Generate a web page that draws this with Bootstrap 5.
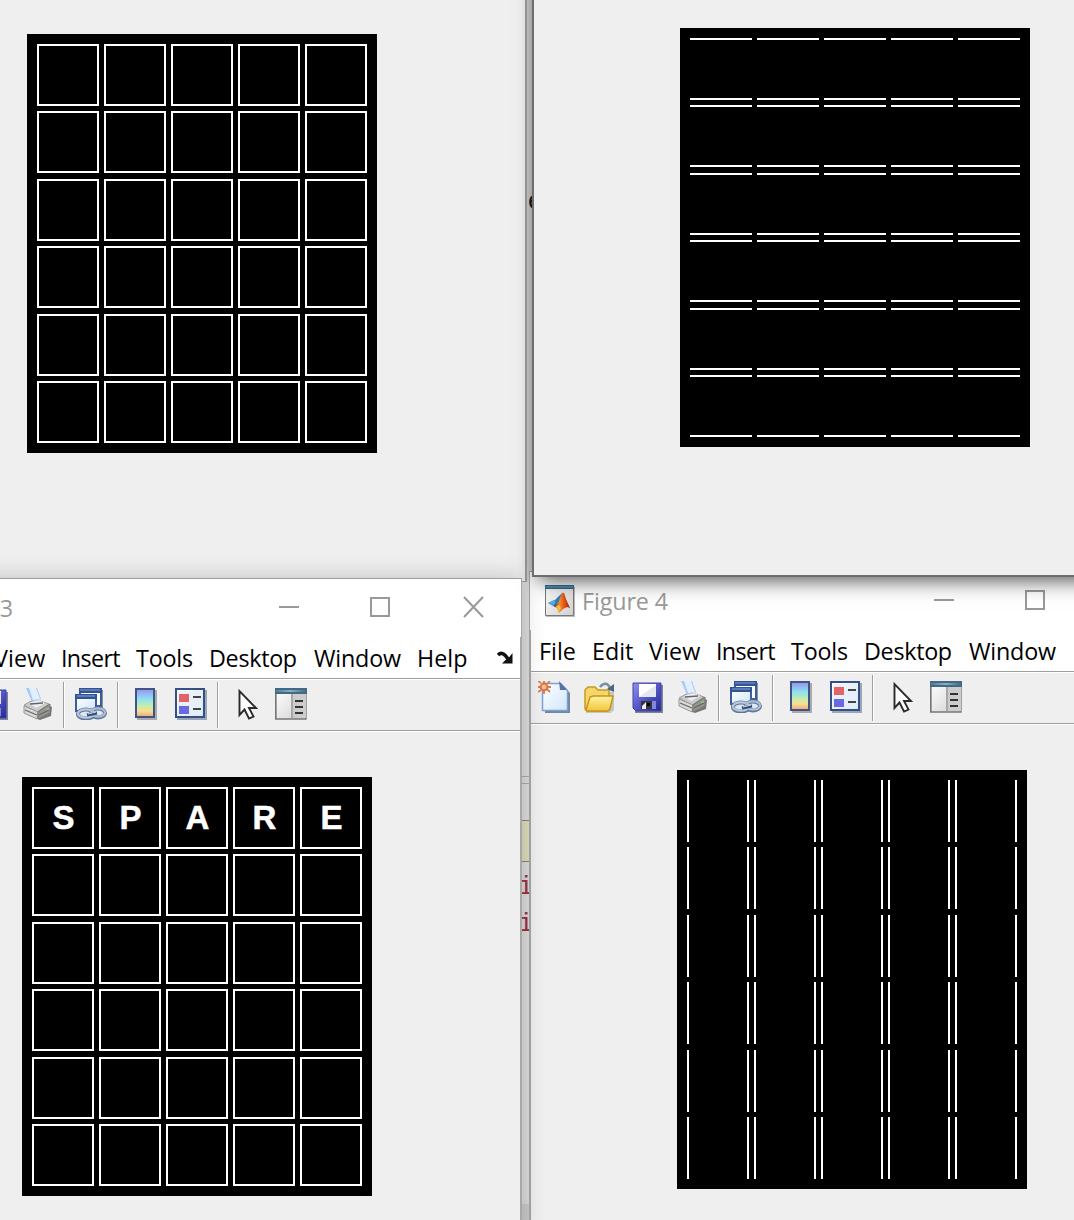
<!DOCTYPE html>
<html lang="en">
<head>
<meta charset="utf-8">
<meta name="viewport" content="width=device-width, initial-scale=1">
<title>Figures</title>
<link href="https://cdn.jsdelivr.net/npm/bootstrap@5.3.0/dist/css/bootstrap.min.css" rel="stylesheet">
<style>
body{margin:0;background:#d3d3d3;font-family:"Open Sans","Noto Sans",sans-serif;color:#000}
.desk{width:1074px;height:1220px;background:#d3d3d3}
/* editor visible between the figure windows */
.editor{left:518px;top:0;width:24px;height:1220px;background:linear-gradient(#d0d0d0 580px,#dcdcdc 580px)}
.code{font-family:"Liberation Mono",monospace;font-size:26px;line-height:30px;color:#1a1a1a}
.err{color:#a03040;border-bottom:1px solid #a02030;line-height:30px;height:22px;width:20px;overflow:visible}
.win{background:#efefef;overflow:hidden}
.w1{left:-120px;top:-200px;width:647px;height:782px;border-right:2px solid #a0a0a0;border-bottom:1px solid #a0a0a0}
.w2{left:532px;top:-200px;width:660px;height:777px;border:2px solid #6d6d6d;box-shadow:0 11px 20px -7px rgba(0,0,0,.6),0 0 14px rgba(0,0,0,.13)}
.w3{left:-126px;top:578px;width:648px;height:660px;box-shadow:0 0 22px rgba(0,0,0,.2)}
.w4{left:529px;top:571px;width:648px;height:667px}
.w3,.w4{border-top:1px solid #9f9f9f}
.w3::after{content:"";position:absolute;right:0;top:0;width:2px;height:660px;background:linear-gradient(90deg,#fff 1px,#a8a8a8 1px) 0 0/2px 58px no-repeat,linear-gradient(transparent 58px,#a8a8a8 58px)}
.w4::after{content:"";position:absolute;left:0;top:0;width:2px;height:667px;background:linear-gradient(90deg,#a8a8a8 1px,#fff 1px) 0 0/2px 58px no-repeat,linear-gradient(transparent 58px,#a8a8a8 58px)}
.caption{height:58px;background:#fff;padding:13px 0 0 15px}
.caption .ttl{color:#999;font-size:23.3px;line-height:32px;margin-left:7px;width:351px;letter-spacing:-.1px}
.caption svg{flex:none}
.menus{height:41px;background:#fff;font-size:23.3px;line-height:42px;padding-left:10px;white-space:nowrap}
.menus span{flex:none}
.m1{width:53px}.m2{width:57px}.m3{width:67px;letter-spacing:.15px}.m4{width:75px;letter-spacing:-.65px}.m5{width:73px;letter-spacing:-.2px}.m6{width:105px;letter-spacing:-.3px}.m7{width:103px;letter-spacing:-.2px}.m8{width:80px}
.tools{height:53px;border-top:1px solid #9f9f9f;border-bottom:1px solid #9f9f9f;box-shadow:inset 0 1px #fff,0 1px #fff;padding:9px 0 0 9px}
.tools svg{flex:none;width:32px;height:32px}
.vsep{flex:none;width:2px;height:46px;background:linear-gradient(90deg,#9f9f9f 1px,#fff 1px);margin-top:-6px}
.board{width:350px;height:419px;background:#000;padding:10px;display:grid;grid-template-columns:repeat(5,62px);column-gap:5px;grid-template-rows:67px 68px 67px 68px 67px 62px}
.board i{height:62px;font:bold 33px/60px "Liberation Sans",Arial,sans-serif;color:#fff;text-align:center}
.full i{border:2px solid #fff}
.horiz i{border:solid #fff;border-width:2px 0}
.vert i{border:solid #fff;border-width:0 2px}
.board.full i{line-height:57px;-webkit-text-stroke:.5px #fff;padding-left:1px}
.w1 .board{margin:234px 0 0 147px}
.w2 .board{margin:226px 0 0 146px}
.w3 .board,.w4 .board{margin:46px 0 0 148px}
</style>
<script src="https://cdn.jsdelivr.net/npm/bootstrap@5.3.0/dist/js/bootstrap.bundle.min.js"></script>
</head>
<body>
<svg width="0" height="0" class="position-absolute">
<defs>
<linearGradient id="gPage" x1="0" y1="0" x2="1" y2="1"><stop stop-color="#fff"/><stop offset="1" stop-color="#cfe6fb"/></linearGradient>
<linearGradient id="gFold" x1="0" y1="0" x2="0" y2="1"><stop stop-color="#fff3a0"/><stop offset="1" stop-color="#f2c43c"/></linearGradient>
<linearGradient id="gSave" x1="0" y1="0" x2="1" y2="1"><stop stop-color="#8f92ee"/><stop offset=".5" stop-color="#5656c8"/><stop offset="1" stop-color="#23278c"/></linearGradient>
<linearGradient id="gRain" x1="0" y1="0" x2="0" y2="1"><stop stop-color="#9a8ff0"/><stop offset=".35" stop-color="#8fe0f4"/><stop offset=".6" stop-color="#c4ecb0"/><stop offset=".78" stop-color="#f6e28c"/><stop offset="1" stop-color="#f0a08c"/></linearGradient>
<linearGradient id="gGrey" x1="0" y1="0" x2="1" y2="1"><stop stop-color="#fff"/><stop offset="1" stop-color="#d0d0d0"/></linearGradient>
<linearGradient id="gBar" x1="0" y1="0" x2="1" y2="0"><stop stop-color="#4f7f9f"/><stop offset=".5" stop-color="#85b3cb"/><stop offset="1" stop-color="#416a87"/></linearGradient>
<linearGradient id="gFlame" x1="0" y1="0" x2="1" y2="0"><stop stop-color="#7a1c18"/><stop offset=".35" stop-color="#f09030"/><stop offset=".55" stop-color="#ee6418"/><stop offset="1" stop-color="#a82010"/></linearGradient>
<symbol id="matlab" viewBox="0 0 31 32"><path d="M2 2h29v30H2z" fill="#bbb"/><path d="M1.500.5h28v30h-28z" fill="url(#gGrey)" stroke="#777"/><path d="M1 0h29v4H1z" fill="#356d91"/><path d="M2 1.300h27v1.200H2z" fill="#6ba0bd"/><path d="M4 18l7-3 4-4 3-3-3 9-4 5z" fill="#267fbe"/><path d="M4 18l5 3 3-4-2-2z" fill="#55a9d8"/><path d="M10 21l4-3 4-10c2-2 3 2 4 6l4 9-3-1-4 2-4 4-2-5z" fill="url(#gFlame)"/><path d="M12 21l3-1 2 3-2 5z" fill="#f5bb42"/></symbol>
<symbol id="new" viewBox="0 0 32 32"><path d="M7 4h17l8 8v20H7z" fill="#74859d"/><path d="M4.500 2.500h18l7 7v20h-25z" fill="url(#gPage)" stroke="#7e9fd4" stroke-width="1.5"/><path d="M21 0l8 9h-7z" fill="#5770a5"/><path d="M0 0l3 2M0 11l3-2M6-1v3M6 10v3M12 0L9 3M12 11L9 8M-1 6h3M10 6h3" stroke="#df7b4c" stroke-width="1.8"/><circle cx="6" cy="6" r="3.4" fill="#ffc397" stroke="#dc7440" stroke-width="2"/></symbol>
<symbol id="open" viewBox="0 0 32 32"><path d="M3 11h27v18l-3 3H2z" fill="#aaa" opacity=".6"/><path d="M1 28V9l3-3h7l3 3h11v17l-2 4H3z" fill="#f5d669" stroke="#c89a22" stroke-width="1.5"/><path d="M2 29l4-13 3-1h20l-3 13-2 2H3z" fill="url(#gFold)" stroke="#c8951c" stroke-width="1.5"/><path d="M16 6c4-5 8-4 10 1" fill="none" stroke="#7690a5" stroke-width="2.5"/><path d="M23 8l7-5v8z" fill="#486782"/></symbol>
<symbol id="save" viewBox="0 0 32 32"><path d="M4 4h28v28H4z" fill="#7e8599"/><path d="M2 2h28v28H5l-3-3z" fill="url(#gSave)" stroke="#3e43a5"/><path d="M8 3h17v13H8z" fill="#fff"/><path d="M8 16L25 4v12z" fill="#e3e5f0"/><path d="M10 20h11v8H10z" fill="#35353c"/><path d="M11 25l4-4v7h-4z" fill="#eee"/><path d="M16 22h3v3h-3z" fill="#050505"/><path d="M21 20h4v8h-4z" fill="#8286de"/></symbol>
<symbol id="print" viewBox="0 0 32 32"><path d="M5 20l12-7 13 6-1 9-11 4-12-5z" fill="#777"/><path d="M2 17l11-6 14 5-12 8z" fill="#ccc" stroke="#999"/><path d="M2 18v7l13 6 1-7z" fill="#d9d9d5" stroke="#999"/><path d="M16 24l12-8v9l-12 6z" fill="#949490" stroke="#777"/><path d="M4 0h11l4 11-9 3z" fill="#a6c9f8"/><path d="M7 0h7l4 11-7 1z" fill="#e1f0ff"/><path d="M7 15l10-3 6 3-9 5z" fill="#eee"/><path d="M3 22l12 5M17 27l10-5M8 16l13-1" stroke="#666" stroke-width="1.3"/><path d="M24 20h3v2h-3z" fill="#91bb76"/></symbol>
<symbol id="link" viewBox="0 0 32 32"><path d="M5 2h23v18h-5" fill="#8390a8"/><path d="M5 1h21v17H5z" fill="#f7faff" stroke="#3d5c9b" stroke-width="2"/><path d="M4 0h23v5H4z" fill="#345394"/><path d="M5 2h20" stroke="#819fd2"/><path d="M1 8h20v15H1z" fill="url(#gPage)" stroke="#3d5c9b" stroke-width="2"/><path d="M0 6h22v5H0z" fill="#315493"/><path d="M2 8h18" stroke="#89a6d7"/><ellipse cx="11" cy="26" rx="8" ry="4.5" fill="#dce8f4" stroke="#5f7597" stroke-width="4"/><ellipse cx="23" cy="25" rx="7" ry="4.5" fill="#dce8f4" stroke="#5f7597" stroke-width="4"/><ellipse cx="11" cy="25.5" rx="8" ry="4.2" fill="none" stroke="#b9c8da" stroke-width="2.2"/><ellipse cx="23" cy="24.5" rx="7" ry="4.2" fill="none" stroke="#abbcd2" stroke-width="2.2"/><path d="M12 27l10-2" stroke="#304d77" stroke-width="3"/><path d="M13 26l8-2" stroke="#d6e2ef"/></symbol>
<symbol id="cbar" viewBox="0 0 32 32"><path d="M7 2h20v30H7z" fill="#aaa"/><path d="M6 1h18v28H6z" fill="url(#gRain)" stroke="#3d5684" stroke-width="2"/></symbol>
<symbol id="legend" viewBox="0 0 32 32"><path d="M2 2h30v30H2z" fill="#9ba5b8"/><path d="M1 1h28v28H1z" fill="url(#gPage)" stroke="#354f85" stroke-width="2"/><path d="M3 3h24v24H3z" fill="#e9eef8" opacity=".7"/><path d="M4 6h10v8H4z" fill="#e36468"/><path d="M4 18h10v8H4z" fill="#6969e3"/><path d="M18 9h8M18 21h8" stroke="#444" stroke-width="2.2"/></symbol>
<symbol id="arrow" viewBox="0 0 32 32"><path d="M9.500 3v24l5-5.500 4.500 9 4.500-2-4.500-8.500h7z" fill="#fff" stroke="#2b2b2b" stroke-width="1.9"/></symbol>
<symbol id="panel" viewBox="0 0 32 32"><path d="M.8 1h30v30H.8z" fill="url(#gGrey)" stroke="#777" stroke-width="1.7"/><path d="M0 0h32v6H0z" fill="#456982"/><path d="M1 2h30v2H1z" fill="url(#gBar)"/><path d="M18 6h13v24H18z" fill="#ccc"/><path d="M16 6h2v24h-2z" fill="#a8a8a8"/><path d="M20 13h8M20 19h8M20 25h8" stroke="#333" stroke-width="2.2"/></symbol>
</defs>
</svg>
<main class="desk position-relative overflow-hidden">
  <div class="editor position-absolute overflow-hidden">
    <div class="code" style="margin:187px 0 0 -6px">.e</div>
    <svg class="position-absolute top-0 start-0" width="24" height="1220" shape-rendering="crispEdges"><path d="M0 820h24v42H0z" fill="#deddbb"/><path d="M0 776.5h24M0 783.5h24" stroke="#ababab"/><path d="M0 820.5h24M0 861.5h24" stroke="#858585"/><path d="M0 1204h24v16H0z" fill="#cacaca"/></svg>
    <div class="code err" style="margin-top:655px">i</div>
    <div class="code err" style="margin-top:15px">i</div>
  </div>

  <section class="win w1 position-absolute"><div class="board full"></div></section>

  <section class="win w4 position-absolute">
    <header class="caption d-flex align-items-start">
      <svg width="31" height="32"><use href="#matlab"/></svg><span class="ttl">Figure 4</span>
      <svg width="120" height="32" fill="none" stroke="#999" stroke-width="2"><path d="M1 15h20M93 6h18v18H93z"/></svg>
    </header>
    <nav class="menus d-flex"><span class="m1">File</span><span class="m2">Edit</span><span class="m3">View</span><span class="m4">Insert</span><span class="m5">Tools</span><span class="m6">Desktop</span><span class="m7">Window</span></nav>
    <div class="tools d-flex">
      <svg><use href="#new"/></svg><svg style="margin-left:14px"><use href="#open"/></svg><svg style="margin-left:15px"><use href="#save"/></svg><svg style="margin-left:14px"><use href="#print"/></svg>
      <b class="vsep" style="margin-left:9px"></b><svg style="margin-left:10px"><use href="#link"/></svg><b class="vsep" style="margin-left:10px"></b><svg style="margin-left:11px"><use href="#cbar"/></svg><svg style="margin-left:13px"><use href="#legend"/></svg><b class="vsep" style="margin-left:10px"></b><svg style="margin-left:11px"><use href="#arrow"/></svg><svg style="margin-left:13px"><use href="#panel"/></svg>
    </div>
    <div class="board vert"></div>
  </section>

  <section class="win w3 position-absolute">
    <header class="caption d-flex align-items-start">
      <svg width="31" height="32"><use href="#matlab"/></svg><span class="ttl">Figure 3</span>
      <svg width="220" height="32" fill="none" stroke="#999" stroke-width="2"><path d="M1 15h20M93 6h18v18H93zM186 5l19 20M205 5l-19 20"/></svg>
    </header>
    <nav class="menus d-flex"><span class="m1">File</span><span class="m2">Edit</span><span class="m3">View</span><span class="m4">Insert</span><span class="m5">Tools</span><span class="m6">Desktop</span><span class="m7">Window</span><span class="m8">Help</span>
      <svg width="17" height="15" style="margin-top:14px"><path d="M1 4c3-3 6-2 10 4" fill="none" stroke="#111" stroke-width="3.5"/><path d="M15.500 2v10.500H5l4-4 3-2z" fill="#111"/></svg></nav>
    <div class="tools d-flex">
      <svg><use href="#new"/></svg><svg style="margin-left:14px"><use href="#open"/></svg><svg style="margin-left:15px"><use href="#save"/></svg><svg style="margin-left:14px"><use href="#print"/></svg>
      <b class="vsep" style="margin-left:9px"></b><svg style="margin-left:10px"><use href="#link"/></svg><b class="vsep" style="margin-left:10px"></b><svg style="margin-left:11px"><use href="#cbar"/></svg><svg style="margin-left:13px"><use href="#legend"/></svg><b class="vsep" style="margin-left:10px"></b><svg style="margin-left:11px"><use href="#arrow"/></svg><svg style="margin-left:13px"><use href="#panel"/></svg>
    </div>
    <div class="board full" data-word="SPARE"></div>
  </section>

  <section class="win w2 position-absolute"><div class="board horiz"></div></section>
</main>
<script>
document.querySelectorAll('.board').forEach(b=>{
  const word=b.dataset.word||'';
  for(let k=0;k<30;k++){const c=document.createElement('i');c.textContent=word[k]||'';b.append(c);}
});
</script>
</body>
</html>
